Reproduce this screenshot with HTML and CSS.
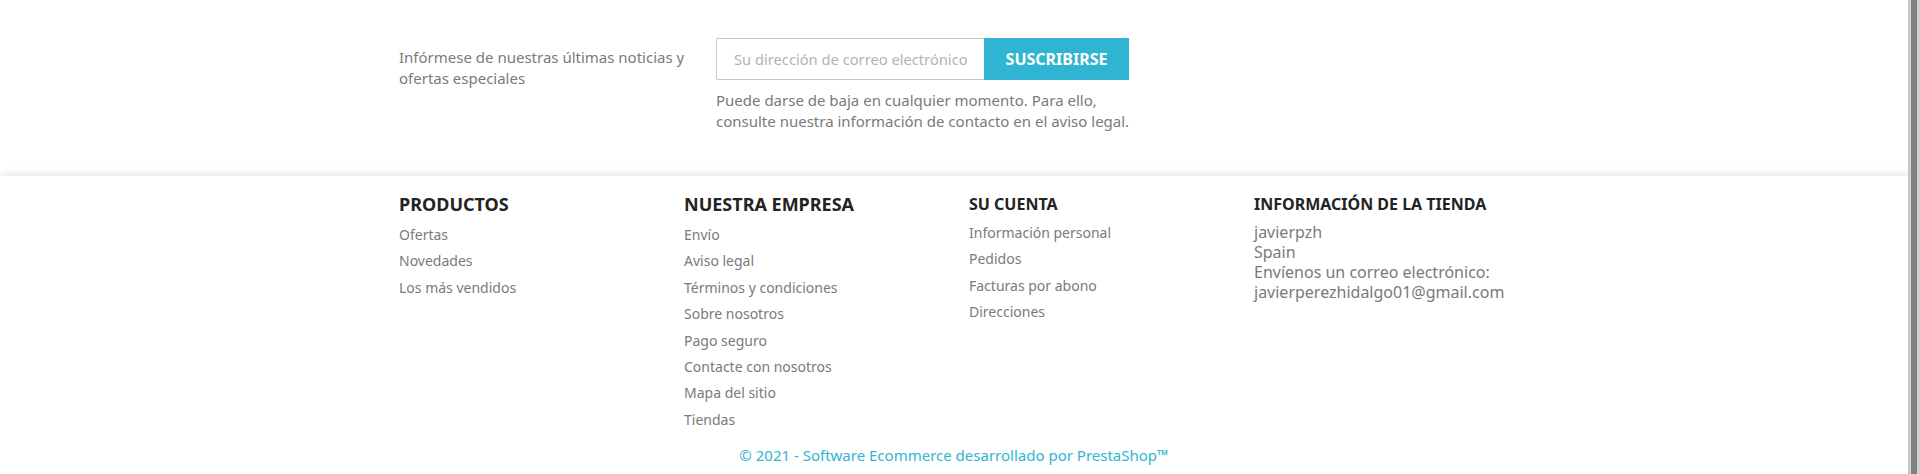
FILE: index.html
```html
<!DOCTYPE html>
<html lang="es">
<head>
<meta charset="utf-8">
<title>Footer</title>
<link rel="stylesheet" href="styles.css">
</head>
<body>
<div class="page">
  <div class="newsletter">
    <div class="container nl-row">
      <p class="nl-label">Infórmese de nuestras últimas noticias y ofertas especiales</p>
      <div class="nl-form">
        <form class="nl-inputs">
          <input class="nl-input" type="email" placeholder="Su dirección de correo electrónico">
          <button class="nl-btn" type="button">Suscribirse</button>
        </form>
        <p class="nl-note">Puede darse de baja en cualquier momento. Para ello, consulte nuestra información de contacto en el aviso legal.</p>
      </div>
    </div>
  </div>
  <footer class="footer">
    <div class="container">
      <div class="cols">
        <div class="col">
          <p class="h3">Productos</p>
          <ul class="links">
            <li><a href="#">Ofertas</a></li>
            <li><a href="#">Novedades</a></li>
            <li><a href="#">Los más vendidos</a></li>
          </ul>
        </div>
        <div class="col">
          <p class="h3">Nuestra empresa</p>
          <ul class="links">
            <li><a href="#">Envío</a></li>
            <li><a href="#">Aviso legal</a></li>
            <li><a href="#">Términos y condiciones</a></li>
            <li><a href="#">Sobre nosotros</a></li>
            <li><a href="#">Pago seguro</a></li>
            <li><a href="#">Contacte con nosotros</a></li>
            <li><a href="#">Mapa del sitio</a></li>
            <li><a href="#">Tiendas</a></li>
          </ul>
        </div>
        <div class="col">
          <p class="h4">Su cuenta</p>
          <ul class="links links-account">
            <li><a href="#">Información personal</a></li>
            <li><a href="#">Pedidos</a></li>
            <li><a href="#">Facturas por abono</a></li>
            <li><a href="#">Direcciones</a></li>
          </ul>
        </div>
        <div class="col">
          <p class="h4">Información de la tienda</p>
          <div class="contact">
            javierpzh<br>
            Spain<br>
            Envíenos un correo electrónico:<br>
            <a href="#">javierperezhidalgo01@gmail.com</a>
          </div>
        </div>
      </div>
      <p class="copyright"><a href="#">© 2021 - Software Ecommerce desarrollado por PrestaShop™</a></p>
    </div>
  </footer>
</div>
<div class="scrollbar"><div class="scrollbar-thumb"></div></div>
</body>
</html>
```

FILE: styles.css
```css
html, body {
  height: 100%;
}
body {
  margin: 0;
  display: flex;
  overflow: hidden;
  background: #fff;
  font-family: "Noto Sans", "Open Sans", sans-serif;
  color: #7a7a7a;
  font-size: 16px;
  line-height: 1.25;
}
p { margin: 0; }
a { color: inherit; text-decoration: none; }

.page {
  flex: 1;
  min-width: 0;
}

.scrollbar {
  width: 12px;
  flex: none;
  box-sizing: border-box;
  background: #d0d0d0;
  border-left: 1px solid #bebebe;
  padding: 0 3px 0 2px;
  display: flex;
}
.scrollbar-thumb {
  flex: 1;
  background: #7f8383;
}

.container {
  width: 1140px;
  margin: 0 auto;
  padding: 0 15px;
  box-sizing: border-box;
}

/* Newsletter */
.newsletter {
  padding: 38px 0 44px;
}
.nl-row {
  display: grid;
  grid-template-columns: 317px 1fr;
}
.nl-label {
  font-size: 15px;
  line-height: 21px;
  padding-top: 9px;
  width: 290px;
}
.nl-inputs {
  display: flex;
  margin: 0;
}
.nl-input {
  width: 268px;
  height: 42px;
  box-sizing: border-box;
  border: 1px solid #c9c5c0;
  border-right: 0;
  border-radius: 2px 0 0 2px;
  padding: 0 17px;
  font-family: "Noto Sans", sans-serif;
  font-size: 14.7px;
  color: #7a7a7a;
  outline: none;
  background: #fff;
}
.nl-input::placeholder {
  color: #b3b3b3;
}
.nl-btn {
  width: 145px;
  height: 42px;
  border: 0;
  background: #2fb5d2;
  color: #fff;
  font-family: "Noto Sans", sans-serif;
  font-weight: 700;
  font-size: 16px;
  text-transform: uppercase;
  padding: 0;
  cursor: pointer;
}
.nl-note {
  font-size: 15px;
  line-height: 21px;
  margin-top: 10px;
  width: 420px;
}

/* Footer */
.footer {
  box-shadow: 2px 2px 11px 0 rgba(0, 0, 0, 0.22);
  padding-top: 18px;
}
.cols {
  display: grid;
  grid-template-columns: repeat(4, 285px);
  margin: 0 -15px;
}
.col {
  padding: 0 15px;
}
.h3 {
  font-size: 18px;
  line-height: 20px;
  font-weight: 700;
  color: #232323;
  text-transform: uppercase;
  margin-bottom: 10px;
}
.h4 {
  font-size: 16px;
  line-height: 20px;
  font-weight: 700;
  color: #232323;
  text-transform: uppercase;
  margin-bottom: 8px;
}
.links {
  list-style: none;
  margin: 0;
  padding: 0;
}
.links li {
  font-size: 14px;
  line-height: 21px;
  margin-bottom: 5.4px;
}
.contact {
  font-size: 16px;
  line-height: 20px;
}
.copyright {
  text-align: center;
  font-size: 15px;
  line-height: 21px;
  color: #2fb5d2;
  margin-top: 10px;
  padding-bottom: 10px;
}
```
